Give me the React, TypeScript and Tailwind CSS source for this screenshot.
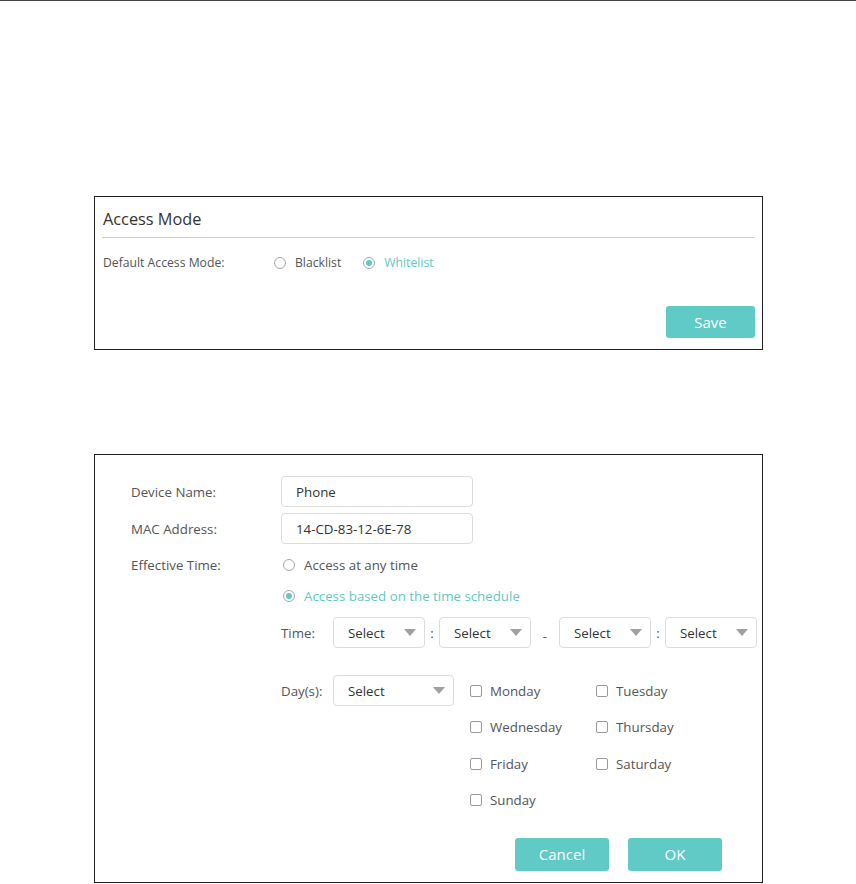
import React from "react"

const font = { fontFamily: '"Open Sans", "Liberation Sans", Arial, sans-serif' }

function Radio({ checked, label }: { checked?: boolean; label: string }) {
  return (
    <div className="flex items-center">
      <span className="w-[12px] h-[12px] rounded-full border border-[#a8a8a8] bg-white flex items-center justify-center shrink-0">
        {checked && <span className="w-[6px] h-[6px] rounded-full bg-[#5fc9c6]" />}
      </span>
      <span className={`ml-[9px] ${checked ? "text-[#5fc9c6]" : "text-[#555]"}`}>{label}</span>
    </div>
  )
}

function Checkbox({ label }: { label: string }) {
  return (
    <div className="flex items-center h-[31px]">
      <span className="w-[12px] h-[12px] rounded-[2px] border border-[#9a9a9a] bg-white shrink-0" />
      <span className="ml-[8px] text-[#555]">{label}</span>
    </div>
  )
}

function Select({ width }: { width: string }) {
  return (
    <div
      className={`${width} h-[31px] rounded-[4px] border border-[#dcdcdc] bg-white flex items-center justify-between pl-[14px] pr-[8px] text-[#333]`}
    >
      <span>Select</span>
      <svg width="12" height="7" viewBox="0 0 12 7">
        <path d="M0 0 H12 L6 7 Z" fill="#a0a0a0" />
      </svg>
    </div>
  )
}

function TealButton({ label, className }: { label: string; className: string }) {
  return (
    <button className={`${className} rounded-[3px] bg-[#60cac7] text-white text-[15px] flex items-center justify-center`}>
      {label}
    </button>
  )
}

export default function App() {
  return (
    <div className="min-h-[884px] bg-white border-t border-[#444]" style={font}>
      {/* Access Mode panel */}
      <div className="ml-[94px] mt-[195px] w-[669px] border border-[#1e1e1e] px-[7px] pb-[11px]">
        <div className="pt-[12px] pb-[8px] pl-[1px] text-[16.3px] leading-[20px] text-[#333] border-b border-[#cccccc]">
          Access Mode
        </div>
        <div className="mt-[15px] flex items-center text-[12.2px] leading-[20px] pl-[1px]">
          <span className="w-[171px] text-[#555]">Default Access Mode:</span>
          <Radio label="Blacklist" />
          <div className="ml-[22px]">
            <Radio checked label="Whitelist" />
          </div>
        </div>
        <div className="mt-[33px] flex justify-end">
          <TealButton label="Save" className="w-[89px] h-[32px]" />
        </div>
      </div>

      {/* Device panel */}
      <div className="ml-[94px] mt-[104px] w-[669px] border border-[#1e1e1e] pl-[36px] pt-[21px] pb-[11px] text-[13.3px] leading-[20px]">
        <div className="flex items-center">
          <span className="w-[150px] text-[#555]">Device Name:</span>
          <div className="w-[192px] h-[31px] rounded-[4px] border border-[#dcdcdc] flex items-center pl-[14px] text-[#333]">
            Phone
          </div>
        </div>
        <div className="mt-[6px] flex items-center">
          <span className="w-[150px] text-[#555]">MAC Address:</span>
          <div className="w-[192px] h-[31px] rounded-[4px] border border-[#dcdcdc] flex items-center pl-[14px] text-[#333]">
            14-CD-83-12-6E-78
          </div>
        </div>
        <div className="mt-[11px] flex">
          <span className="w-[150px] text-[#555]">Effective Time:</span>
          <div className="flex flex-col">
            <div className="ml-[2px]">
              <Radio label="Access at any time" />
            </div>
            <div className="ml-[2px] mt-[11px]">
              <Radio checked label="Access based on the time schedule" />
            </div>
            <div className="mt-[11px] flex items-center">
              <span className="w-[52px] text-[#555]">Time:</span>
              <Select width="w-[92px]" />
              <span className="w-[14px] text-center text-[#555]">:</span>
              <Select width="w-[92px]" />
              <span className="w-[28px] text-center text-[#555] mt-[6px]">-</span>
              <Select width="w-[92px]" />
              <span className="w-[14px] text-center text-[#555]">:</span>
              <Select width="w-[92px]" />
            </div>
            <div className="mt-[27px] flex items-start">
              <div className="flex items-center h-[31px]">
                <span className="w-[52px] text-[#555]">Day(s):</span>
                <Select width="w-[121px]" />
              </div>
              <div className="ml-[16px] grid grid-cols-[126px_auto] gap-y-[5.5px]">
                <Checkbox label="Monday" />
                <Checkbox label="Tuesday" />
                <Checkbox label="Wednesday" />
                <Checkbox label="Thursday" />
                <Checkbox label="Friday" />
                <Checkbox label="Saturday" />
                <Checkbox label="Sunday" />
              </div>
            </div>
          </div>
        </div>
        <div className="mt-[22px] flex justify-end gap-[19px] pr-[40px]">
          <TealButton label="Cancel" className="w-[94px] h-[33px]" />
          <TealButton label="OK" className="w-[94px] h-[33px]" />
        </div>
      </div>
    </div>
  )
}
